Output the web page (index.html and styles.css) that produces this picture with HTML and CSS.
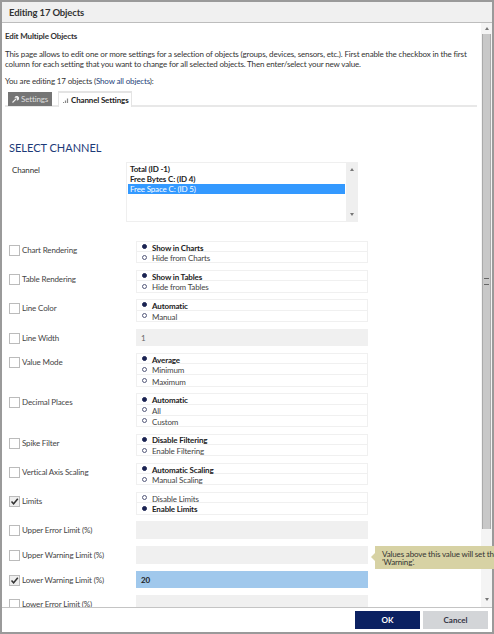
FILE: index.html
```html
<!DOCTYPE html>
<html>
<head>
    <meta charset="UTF-8">
    <title>Editing 17 Objects</title>
    <link rel="stylesheet" href="styles.css">
</head>
<body>
    <div id="dialog">
        <div id="title">Editing 17 Objects</div>
        <div id="middle">
            <div id="content">
                <div id="intro-head">Edit Multiple Objects</div>
                <p id="intro">This page allows to edit one or more settings for a selection of objects (groups, devices, sensors, etc.). First enable the checkbox in the first column for each setting that you want to change for all selected objects. Then enter/select your new value.</p>
                <p id="editing">You are editing 17 objects (<a href="#">Show all objects</a>):</p>
                <div id="tabs">
                    <div class="tab tab-off">
                        <svg width="7" height="7" viewBox="0 0 7 7"><path d="M0.5 6.5 L4 3 M3.2 2.2 A1.6 1.6 0 0 1 5.6 0.6 L4.6 1.8 L5.3 2.5 L6.5 1.5 A1.6 1.6 0 0 1 4.8 3.8" fill="none" stroke="#eee" stroke-width="1.1"/></svg>
                        Settings
                    </div>
                    <div class="tab tab-on">
                        <svg width="6" height="6" viewBox="0 0 6 6"><path d="M0.5 6V5M2.5 6V3.5M4.5 6V1.5" stroke="#888" stroke-width="1.2"/></svg>
                        Channel Settings
                    </div>
                </div>
                <h2 id="section">SELECT CHANNEL</h2>
                <div id="channel-row">
                    <div id="channel-label">Channel</div>
                    <div id="channel-list">
                        <div id="channel-items">
                            <div class="chan">Total (ID -1)</div>
                            <div class="chan">Free Bytes C: (ID 4)</div>
                            <div class="chan chan-sel">Free Space C: (ID 5)</div>
                        </div>
                        <div id="channel-scroll"><span class="arrow-up"></span><span class="arrow-down"></span></div>
                    </div>
                </div>

                <div id="rows">
                    <div class="row">
                        <div class="label"><span class="check"></span>Chart Rendering</div>
                        <div class="radios">
                            <div class="radio on"><i></i>Show in Charts</div>
                            <div class="radio"><i></i>Hide from Charts</div>
                        </div>
                    </div>
                    <div class="row">
                        <div class="label"><span class="check"></span>Table Rendering</div>
                        <div class="radios">
                            <div class="radio on"><i></i>Show in Tables</div>
                            <div class="radio"><i></i>Hide from Tables</div>
                        </div>
                    </div>
                    <div class="row">
                        <div class="label"><span class="check"></span>Line Color</div>
                        <div class="radios">
                            <div class="radio on"><i></i>Automatic</div>
                            <div class="radio"><i></i>Manual</div>
                        </div>
                    </div>
                    <div class="row">
                        <div class="label"><span class="check"></span>Line Width</div>
                        <div class="field">1</div>
                    </div>
                    <div class="row">
                        <div class="label"><span class="check"></span>Value Mode</div>
                        <div class="radios">
                            <div class="radio on"><i></i>Average</div>
                            <div class="radio"><i></i>Minimum</div>
                            <div class="radio"><i></i>Maximum</div>
                        </div>
                    </div>
                    <div class="row">
                        <div class="label"><span class="check"></span>Decimal Places</div>
                        <div class="radios">
                            <div class="radio on"><i></i>Automatic</div>
                            <div class="radio"><i></i>All</div>
                            <div class="radio"><i></i>Custom</div>
                        </div>
                    </div>
                    <div class="row">
                        <div class="label"><span class="check"></span>Spike Filter</div>
                        <div class="radios">
                            <div class="radio on"><i></i>Disable Filtering</div>
                            <div class="radio"><i></i>Enable Filtering</div>
                        </div>
                    </div>
                    <div class="row">
                        <div class="label"><span class="check"></span>Vertical Axis Scaling</div>
                        <div class="radios">
                            <div class="radio on"><i></i>Automatic Scaling</div>
                            <div class="radio"><i></i>Manual Scaling</div>
                        </div>
                    </div>
                    <div class="row">
                        <div class="label"><span class="check checked"><svg width="9" height="9" viewBox="0 0 9 9"><path d="M1.5 4.5 L3.6 6.8 L7.8 1.8" fill="none" stroke="#333" stroke-width="1.5"/></svg></span>Limits</div>
                        <div class="radios">
                            <div class="radio"><i></i>Disable Limits</div>
                            <div class="radio on"><i></i>Enable Limits</div>
                        </div>
                    </div>
                    <div class="row">
                        <div class="label"><span class="check"></span>Upper Error Limit (%)</div>
                        <div class="field"></div>
                    </div>
                    <div class="row">
                        <div class="label"><span class="check"></span>Upper Warning Limit (%)</div>
                        <div class="field"></div>
                        <div id="tooltip">Values above this value will set the<br>'Warning'.</div>
                    </div>
                    <div class="row">
                        <div class="label"><span class="check checked"><svg width="9" height="9" viewBox="0 0 9 9"><path d="M1.5 4.5 L3.6 6.8 L7.8 1.8" fill="none" stroke="#333" stroke-width="1.5"/></svg></span>Lower Warning Limit (%)</div>
                        <div class="field field-active">20</div>
                    </div>
                    <div class="row">
                        <div class="label"><span class="check"></span>Lower Error Limit (%)</div>
                        <div class="field"></div>
                    </div>
                </div>
            </div>
            <div id="scrollbar">
                <span class="arrow-up"></span>
                <div id="thumb"><span id="grip"></span></div>
                <span class="arrow-down"></span>
            </div>
        </div>
        <div id="footer">
            <button id="okButton">OK</button>
            <button id="cancelButton">Cancel</button>
        </div>
    </div>
</body>
</html>
```

FILE: styles.css
```css
html, body {
    margin: 0;
    padding: 0;
    height: 100%;
    overflow: hidden;
}
body {
    font-family: Lato, "Open Sans", sans-serif;
    font-size: 8px;
    letter-spacing: -0.15px;
    line-height: 10px;
    color: #333;
    background: #9a9a9a;
}
#dialog {
    width: 490px;
    height: 630px;
    margin: 2px;
    background: white;
    display: flex;
    flex-direction: column;
}
#title {
    flex: none;
    box-sizing: border-box;
    height: 21px;
    padding: 0 7px;
    line-height: 21px;
    font-size: 9.5px;
    font-weight: 700;
    background: #f0f0f0;
    border-bottom: 1px solid #bdbdbd;
}
#middle {
    flex: 1;
    min-height: 0;
    display: flex;
}
#content {
    flex: 1;
    min-width: 0;
    padding: 0 3px;
}
#intro-head {
    margin-top: 8px;
    font-weight: 700;
    height: 12px;
}
#intro {
    margin: 6px 0 0;
    width: 470px;
}
#editing {
    margin: 7px 0 0;
}
#editing a {
    color: #1d3f7a;
    text-decoration: none;
}
#tabs {
    margin-top: 4px;
    display: flex;
    gap: 6px;
    padding-left: 3px;
    height: 15px;
    align-items: flex-end;
    border-bottom: 2px solid #e8e8e8;
    width: 469px;
}
.tab {
    display: flex;
    align-items: center;
    gap: 2px;
    box-sizing: border-box;
    white-space: nowrap;
}
.tab-off {
    width: 44px;
    height: 14px;
    margin-bottom: -1px;
    padding-left: 4px;
    background: #757575;
    color: #ddd;
}
.tab-on {
    width: 74px;
    height: 16px;
    margin-bottom: -2px;
    padding-left: 4px;
    background: white;
    font-weight: 700;
    color: #222;
    border: 1px solid #e4e4e4;
    border-bottom: none;
    border-top-width: 2px;
}
#section {
    margin: 34px 0 0 4px;
    font-size: 11px;
    line-height: 14px;
    font-weight: 400;
    letter-spacing: 0;
    color: #1c3a78;
}
#channel-row {
    display: flex;
    margin-top: 7px;
}
#channel-label {
    width: 121px;
    padding: 3px 0 0 7px;
    box-sizing: border-box;
}
#channel-list {
    width: 232px;
    height: 60px;
    box-sizing: border-box;
    border: 1px solid #efefef;
    display: flex;
}
#channel-items {
    flex: 1;
    padding: 1px;
}
#channel-scroll {
    width: 11px;
    background: #efefef;
    display: flex;
    flex-direction: column;
    justify-content: space-between;
    align-items: center;
    padding: 5px 0;
    box-sizing: border-box;
}
.chan {
    height: 10px;
    line-height: 10px;
    font-weight: 700;
    color: #222;
    padding-left: 2px;
}
.chan-sel {
    background: #3399ff;
    color: white;
    font-weight: 400;
}
.arrow-up, .arrow-down {
    display: block;
    width: 0;
    height: 0;
    border-left: 2.5px solid transparent;
    border-right: 2.5px solid transparent;
}
.arrow-up {
    border-bottom: 3px solid #777;
}
.arrow-down {
    border-top: 3px solid #777;
}
#rows {
    margin-top: 19px;
    display: flex;
    flex-direction: column;
    gap: 6.8px;
}
.row {
    display: flex;
    position: relative;
}
.label {
    width: 131px;
    padding: 4px 0 0 4px;
    box-sizing: border-box;
    display: flex;
    align-items: flex-start;
    color: #444;
}
.check {
    width: 11px;
    height: 11px;
    box-sizing: border-box;
    border: 1.5px solid #bbb;
    margin-right: 2px;
    flex: none;
    display: flex;
    align-items: center;
    justify-content: center;
}
.checked {
    background: #eee;
}
.radios {
    width: 232px;
    box-sizing: border-box;
    border-left: 1px solid #f0f0f0;
    border-right: 1px solid #f0f0f0;
}
.radio {
    height: 11.2px;
    box-sizing: border-box;
    display: flex;
    align-items: center;
    padding: 2px 0 0 5px;
    color: #444;
    border-bottom: 1px solid #f0f0f0;
}
.radio:first-child {
    border-top: 1px solid #f0f0f0;
}
.radio i {
    width: 5px;
    height: 5px;
    box-sizing: border-box;
    border: 1px solid #54597a;
    border-radius: 50%;
    margin: -2px 5px 0 0;
    flex: none;
}
.radio.on {
    font-weight: 700;
    color: #222;
}
.radio.on i {
    background: #1a2352;
    border-color: #1a2352;
}
.field {
    width: 232px;
    height: 17.8px;
    background: #f0f0f0;
    line-height: 18px;
    padding-left: 5px;
    box-sizing: border-box;
    color: #666;
}
.field-active {
    background: #a0c8ec;
    color: #222;
    font-weight: 700;
}
#tooltip {
    position: absolute;
    left: 370px;
    top: 0;
    width: 119px;
    height: 23px;
    box-sizing: border-box;
    padding: 4px 0 0 7px;
    line-height: 8.5px;
    background: #d7d2a4;
    color: #333;
    white-space: nowrap;
}
#tooltip::before {
    content: "";
    position: absolute;
    left: -4px;
    top: 7px;
    border-top: 4px solid transparent;
    border-bottom: 4px solid transparent;
    border-right: 4px solid #d7d2a4;
}
#scrollbar {
    width: 11px;
    flex: none;
    background: #f4f4f4;
    display: flex;
    flex-direction: column;
    align-items: center;
    padding-top: 4px;
    box-sizing: border-box;
}
#thumb {
    width: 9px;
    height: 495px;
    margin-top: 4px;
    background: #c8c8c8;
    display: flex;
    align-items: center;
    justify-content: center;
    box-sizing: border-box;
    border-left: 1px solid #aaa;
    border-right: 1px solid #aaa;
}
#grip {
    width: 5px;
    height: 5px;
    border-top: 1px solid #666;
    border-bottom: 1px solid #666;
}
#scrollbar .arrow-down {
    margin-top: 69px;
}
#footer {
    flex: none;
    position: relative;
    height: 25px;
    box-sizing: border-box;
    border-top: 1px solid #c4c4c4;
    display: flex;
    justify-content: flex-end;
    align-items: center;
    gap: 3px;
    padding-right: 4px;
    background: white;
}
#footer button {
    width: 65px;
    height: 18px;
    border: none;
    padding: 0;
    font-family: inherit;
    font-size: 8px;
    font-weight: 700;
}
#okButton {
    background: #0b2161;
    color: white;
}
#cancelButton {
    background: #d3d5d8;
    color: #334;
}
```
